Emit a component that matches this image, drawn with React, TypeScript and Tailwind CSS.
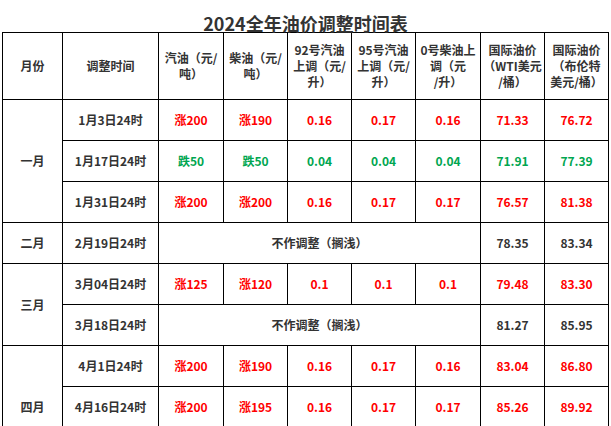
const RED = "text-[#ff0000]";
const GREEN = "text-[#00a650]";

type Row = {
  month?: { label: string; span: number };
  time: string;
  skip?: boolean;
  cells?: string[];
  wti: string;
  brent: string;
  tone: "red" | "green" | "dark";
  intlTone?: "red" | "green" | "dark";
};

const rows: Row[] = [
  { month: { label: "一月", span: 3 }, time: "1月3日24时", cells: ["涨200", "涨190", "0.16", "0.17", "0.16"], wti: "71.33", brent: "76.72", tone: "red" },
  { time: "1月17日24时", cells: ["跌50", "跌50", "0.04", "0.04", "0.04"], wti: "71.91", brent: "77.39", tone: "green" },
  { time: "1月31日24时", cells: ["涨200", "涨200", "0.16", "0.17", "0.17"], wti: "76.57", brent: "81.38", tone: "red" },
  { month: { label: "二月", span: 1 }, time: "2月19日24时", skip: true, wti: "78.35", brent: "83.34", tone: "dark" },
  { month: { label: "三月", span: 2 }, time: "3月04日24时", cells: ["涨125", "涨120", "0.1", "0.1", "0.1"], wti: "79.48", brent: "83.30", tone: "red" },
  { time: "3月18日24时", skip: true, wti: "81.27", brent: "85.95", tone: "dark" },
  { month: { label: "四月", span: 3 }, time: "4月1日24时", cells: ["涨200", "涨190", "0.16", "0.17", "0.16"], wti: "83.04", brent: "86.80", tone: "red" },
  { time: "4月16日24时", cells: ["涨200", "涨195", "0.16", "0.17", "0.17"], wti: "85.26", brent: "89.92", tone: "red" },
  { time: "4月30日24时", skip: true, wti: "82.63", brent: "88.02", tone: "dark" },
];

const toneClass = (t: Row["tone"]) => (t === "red" ? RED : t === "green" ? GREEN : "text-[#333333]");

const cell = "border border-black text-center align-middle p-0";

export default function App() {
  return (
    <div
      className="h-[426px] w-[611px] overflow-hidden bg-white text-[12px] font-bold text-[#333333]"
      style={{ fontFamily: '"Noto Sans CJK SC", "Noto Sans", sans-serif' }}
    >
      <h1 className="h-[32px] pt-[14px] text-center text-[18px] leading-[18px] font-bold text-[#333333]">
        2024全年油价调整时间表
      </h1>
      <table className="ml-[2px] w-[606px] table-fixed border-collapse">
        <colgroup>
          <col className="w-[60px]" />
          <col className="w-[96px]" />
          <col className="w-[65px]" />
          <col className="w-[64px]" />
          <col className="w-[64px]" />
          <col className="w-[64px]" />
          <col className="w-[65px]" />
          <col className="w-[64px]" />
          <col className="w-[64px]" />
        </colgroup>
        <thead>
          <tr className="h-[67px] leading-[16px]">
            <th className={cell}>月份</th>
            <th className={cell}>调整时间</th>
            <th className={cell}>汽油（元/<br />吨）</th>
            <th className={cell}>柴油（元/<br />吨）</th>
            <th className={cell}>92号汽油<br />上调（元/<br />升）</th>
            <th className={cell}>95号汽油<br />上调（元/<br />升）</th>
            <th className={cell}>0号柴油上<br />调（元<br />/升）</th>
            <th className={cell}>国际油价<br />（WTI美元<br />/桶）</th>
            <th className={cell}>国际油价<br />（布伦特<br />美元/桶）</th>
          </tr>
        </thead>
        <tbody>
          {rows.map((r) => (
            <tr key={r.time} className="h-[41px]">
              {r.month && (
                <td className={cell} rowSpan={r.month.span}>
                  {r.month.label}
                </td>
              )}
              <td className={cell}>{r.time}</td>
              {r.skip ? (
                <td className={cell} colSpan={5}>
                  不作调整（搁浅）
                </td>
              ) : (
                r.cells!.map((c, i) => (
                  <td key={i} className={`${cell} ${toneClass(r.tone)}`}>
                    {c}
                  </td>
                ))
              )}
              <td className={`${cell} ${toneClass(r.tone)}`}>{r.wti}</td>
              <td className={`${cell} ${toneClass(r.tone)}`}>{r.brent}</td>
            </tr>
          ))}
        </tbody>
      </table>
    </div>
  );
}
